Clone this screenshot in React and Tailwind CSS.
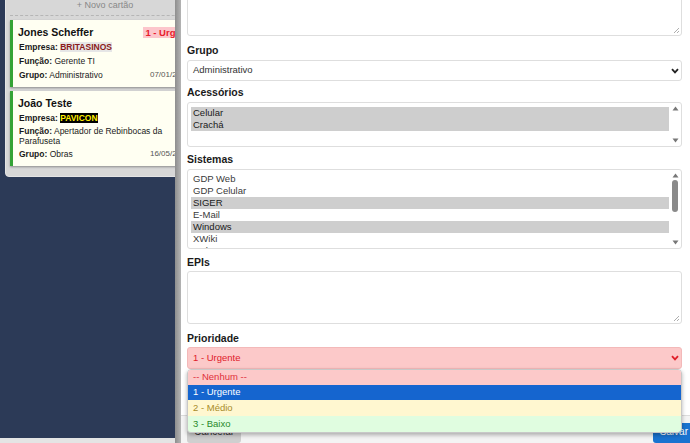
import React from 'react'

function Chevron({ color = '#222' }) {
  return (
    <svg width="8" height="6" viewBox="0 0 8 6" className="shrink-0">
      <path d="M1 1.2 L4 4.4 L7 1.2" fill="none" stroke={color} strokeWidth="1.8" />
    </svg>
  )
}

function ResizeGrip() {
  return (
    <svg width="7" height="7" viewBox="0 0 7 7" className="absolute bottom-[1px] right-[1px]">
      <path d="M6 1 L1 6 M6 4 L4 6" stroke="#999" strokeWidth="0.8" />
    </svg>
  )
}

function ScrollCol({ thumb }) {
  return (
    <div className="flex w-[12px] flex-col items-center justify-between py-[3px]">
      <svg width="7" height="5" viewBox="0 0 7 5"><path d="M3.5 0.5 L6.5 4.5 L0.5 4.5 Z" fill="#777" /></svg>
      {thumb ? <div className="mb-auto mt-[2px] h-[32px] w-[6px] rounded-full bg-[#8a8a8a]" /> : <div className="flex-1" />}
      <svg width="7" height="5" viewBox="0 0 7 5"><path d="M0.5 0.5 L6.5 0.5 L3.5 4.5 Z" fill="#777" /></svg>
    </div>
  )
}

function ListBox({ items, height, pt, thumb }) {
  return (
    <div className="flex overflow-hidden rounded-[3px] border border-[#dedede] bg-white" style={{ height }}>
      <div className="flex-1 pl-[3px]" style={{ paddingTop: pt }}>
        {items.map((it) => (
          <div
            key={it.t}
            className={`h-[12px] pl-[2px] text-[9.5px] leading-[12px] ${it.s ? 'bg-[#cecece] text-[#1a1a1a]' : 'text-[#3a3a3a]'}`}
          >
            {it.t}
          </div>
        ))}
      </div>
      <ScrollCol thumb={thumb} />
    </div>
  )
}

function Label({ children, className = '' }) {
  return <div className={`h-[14px] text-[10.5px] font-bold leading-[14px] text-[#1a1a1a] ${className}`}>{children}</div>
}

function Card({ name, badge, empresa, empresaClass, funcao, grupo, date, top }) {
  return (
    <div className={`w-[190px] border-l-[3px] border-[#35a335] bg-[#fffff2] pb-[5px] pl-[5px] pr-[3px] pt-[4px] shadow-[0_1px_2px_rgba(0,0,0,0.35)] ${top}`}>
      <div className="flex items-center justify-between">
        <span className="text-[10.5px] font-bold leading-[16px] text-[#111]">{name}</span>
        {badge && <span className="bg-[#fcc6cb] px-[2px] text-[9.5px] font-bold leading-[11px] text-[#e8202a]">{badge}</span>}
      </div>
      <div className="pl-[1px] text-[8.5px] text-[#1a1a1a]">
        <div className="leading-[14px]">
          <b>Empresa:</b> <span className={`font-bold ${empresaClass}`}>{empresa}</span>
        </div>
        <div className="flex min-h-[14px] items-center py-[1px] leading-[10px]">
          <span><b>Função:</b> {funcao}</span>
        </div>
        <div className="flex items-end justify-between leading-[14px]">
          <span><b>Grupo:</b> {grupo}</span>
          <span className="mr-[7px] text-[8px] text-[#555]">{date}</span>
        </div>
      </div>
    </div>
  )
}

export default function App() {
  return (
    <div className="relative h-[443px] w-[690px] overflow-hidden bg-[#2c3a57] font-['Liberation_Sans',Arial,sans-serif]">
      <div className="flex pl-[5px]">
        <div className="-mt-[6px] w-[205px] rounded-b-[4px] border border-[#e4e4e4] bg-[#d7d7d7] px-[4px] pb-[10px]">
          <div className="flex h-[21px] w-[190px] items-end justify-center border-b border-dashed border-[#b5b5b5] pb-[4px] text-[9px] leading-[12px] text-[#888]">
            + Novo cartão
          </div>
          <Card
            top="mt-[4px]"
            name="Jones Scheffer"
            badge="1 - Urgente"
            empresa="BRITASINOS"
            empresaClass="bg-[#e6e6e6] text-[#8b1a1a]"
            funcao="Gerente TI"
            grupo="Administrativo"
            date="07/01/2019"
          />
          <Card
            top="mt-[4px]"
            name="João Teste"
            empresa="PAVICON"
            empresaClass="bg-black text-[#ffee00]"
            funcao="Apertador de Rebinbocas da Parafuseta"
            grupo="Obras"
            date="16/05/2019"
          />
        </div>
      </div>
      <div className="absolute bottom-0 left-0 right-0 h-[5px] bg-[#e4e4e4]" />

      <div className="absolute inset-y-0 left-[175px] right-0 flex">
        <div className="w-[6px] bg-gradient-to-r from-[#8e8e8e] to-[#b4b4b4]" />
        <div className="flex flex-1 flex-col bg-white">
          <div className="h-[425px] overflow-visible pl-[6px] pr-[8px]">
            <div className="relative -mt-[20px] h-[56px] rounded-[3px] border border-[#dedede]">
              <ResizeGrip />
            </div>

            <Label className="mb-[3px] mt-[7px]">Grupo</Label>
            <div className="flex h-[21px] items-center justify-between rounded-[3px] border border-[#dedede] pl-[5px] pr-[2px] text-[9.5px] text-[#333]">
              <span>Administrativo</span>
              <Chevron />
            </div>

            <Label className="mb-[3px] mt-[4px]">Acessórios</Label>
            <ListBox height={45} pt={4} items={[{ t: 'Celular', s: true }, { t: 'Crachá', s: true }]} />

            <Label className="mb-[3px] mt-[5px]">Sistemas</Label>
            <ListBox
              height={80}
              pt={3}
              thumb
              items={[
                { t: 'GDP Web' },
                { t: 'GDP Celular' },
                { t: 'SIGER', s: true },
                { t: 'E-Mail' },
                { t: 'Windows', s: true },
                { t: 'XWiki' },
                { t: 'Qglet' },
              ]}
            />

            <Label className="mb-[2px] mt-[6px]">EPIs</Label>
            <div className="relative h-[53px] rounded-[3px] border border-[#dedede]">
              <ResizeGrip />
            </div>

            <Label className="mb-[2px] mt-[7px]">Prioridade</Label>
            <div className="relative z-10">
              <div className="flex h-[22px] items-center justify-between rounded-[3px] border border-[#f3b9b9] bg-[#fcc9c9] pl-[5px] pr-[2px] text-[9.5px] text-[#e0202a]">
                <span>1 - Urgente</span>
                <Chevron color="#e0202a" />
              </div>
              <div className="absolute left-0 right-0 top-full overflow-hidden rounded-[4px] border border-[#c8c8c8] text-[9.5px] shadow-[0_2px_4px_rgba(0,0,0,0.3)]">
                <div className="flex h-[15px] items-center bg-[#fcc9c9] pl-[5px] text-[#e0303a]">-- Nenhum --</div>
                <div className="flex h-[15px] items-center bg-[#1565cf] pl-[5px] text-white">1 - Urgente</div>
                <div className="flex h-[16px] items-center bg-[#fff7d0] pl-[5px] text-[#a88c2a]">2 - Médio</div>
                <div className="flex h-[16px] items-center bg-[#e0fde0] pl-[5px] text-[#2a8a2a]">3 - Baixo</div>
              </div>
            </div>
          </div>

          <div className="flex flex-1 items-start justify-between border-t border-[#dcdcdc] bg-[#f4f4f4] pl-[6px] pt-[7px]">
            <div className="h-[20px] rounded-[3px] bg-[#cfcfcf] px-[7px] text-[10px] leading-[18px] text-[#333]">Cancelar</div>
            <div className="-mr-[5px] h-[20px] rounded-[3px] bg-[#1a73d0] px-[7px] text-[10px] leading-[18px] text-white">Salvar</div>
          </div>
        </div>
      </div>
    </div>
  )
}
